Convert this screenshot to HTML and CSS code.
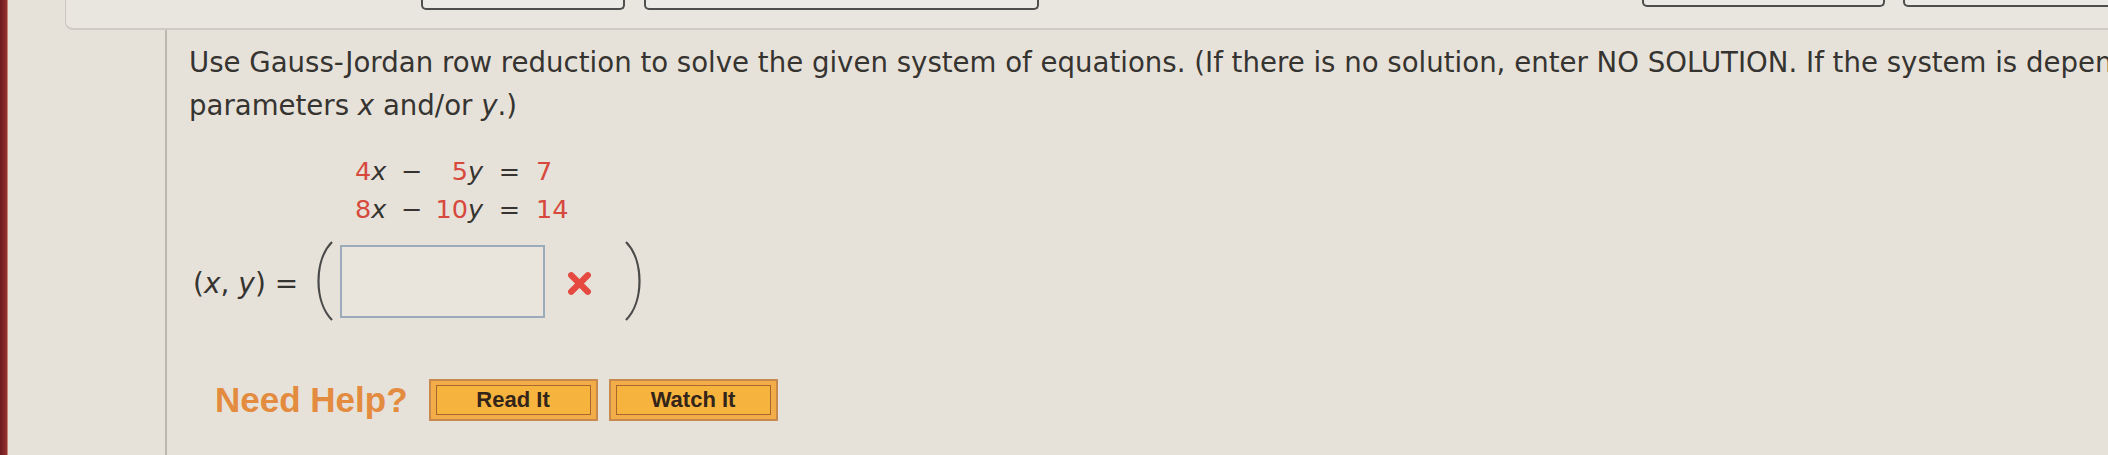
FILE: index.html
```html
<!DOCTYPE html>
<html lang="en">
<head>
<meta charset="utf-8">
<title>Gauss-Jordan</title>
<link rel="stylesheet" href="styles.css">
</head>
<body>
<div class="page">
  <div class="edge"></div>
  <div class="main">
    <div class="toolbar">
      <span class="tab t1"></span>
      <span class="tab t2"></span>
      <span class="tab t3"></span>
      <span class="tab t4"></span>
    </div>
    <div class="content">
      <div class="side"></div>
      <div class="question">
        <p class="prompt">Use Gauss-Jordan row reduction to solve the given system of equations. (If there is no solution, enter NO SOLUTION. If the system is dependent, express your answer in terms of the<br>parameters <i>x</i> and/or <i>y</i>.)</p>
        <div class="system">
          <span class="c1"><span class="coef">4</span><i>x</i></span>
          <span class="c2">&minus;</span>
          <span class="c3"><span class="coef">5</span><i>y</i></span>
          <span class="c4">=</span>
          <span class="c5 coef">7</span>
          <span class="c1"><span class="coef">8</span><i>x</i></span>
          <span class="c2">&minus;</span>
          <span class="c3"><span class="coef">10</span><i>y</i></span>
          <span class="c4">=</span>
          <span class="c5 coef">14</span>
        </div>
        <div class="answer">
          <span class="label">(<i>x</i>, <i>y</i>) =</span>
          <svg class="paren open" width="24" height="82" viewBox="0 0 24 82"><path d="M21 2 C3 20, 3 62, 21 80" /></svg>
          <span class="field"></span>
          <svg class="wrong" width="27" height="27" viewBox="0 0 26 26"><path d="M5 5 L21 21 M21 5 L5 21" /></svg>
          <svg class="paren close" width="24" height="82" viewBox="0 0 24 82"><path d="M3 2 C21 20, 21 62, 3 80" /></svg>
        </div>
        <div class="help">
          <span class="need">Need Help?</span>
          <span class="btn read"><span class="btn-inner">Read It</span></span>
          <span class="btn watch"><span class="btn-inner">Watch It</span></span>
        </div>
      </div>
    </div>
  </div>
</div>
</body>
</html>
```

FILE: styles.css
```css
html, body {
  margin: 0;
  padding: 0;
  width: 2108px;
  height: 455px;
  overflow: hidden;
  background: #e7e2d9;
}

.page {
  display: flex;
  width: 2108px;
  height: 455px;
  overflow: hidden;
}

.edge {
  width: 7px;
  flex-shrink: 0;
  background: linear-gradient(to right, #6e1a1e, #93302f);
  border-right: 1px solid #c98677;
}

.main {
  flex: 1;
  min-width: 0;
  display: flex;
  flex-direction: column;
}

.toolbar {
  margin-left: 57px;
  height: 30px;
  box-sizing: border-box;
  border-left: 1px solid #cdc8bf;
  border-bottom: 2px solid #cfcac2;
  border-bottom-left-radius: 8px;
  background: #e9e6e0;
  display: flex;
  align-items: flex-start;
  overflow: hidden;
}

.tab {
  display: block;
  flex-shrink: 0;
  height: 10px;
  box-sizing: border-box;
  border: 2px solid #4e4e4e;
  border-top: 0;
  border-radius: 0 0 5px 5px;
  background: #eceae6;
}

.t1 { margin-left: 355px; width: 204px; }
.t2 { margin-left: 19px; width: 395px; }
.t3 { margin-left: 603px; width: 243px; height: 7px; }
.t4 { margin-left: 18px; width: 260px; height: 7px; }

.content {
  flex: 1;
  display: flex;
}

.side {
  width: 157px;
  flex-shrink: 0;
  border-right: 2px solid #bdb8af;
}

.question {
  flex: 1;
  min-width: 0;
  padding-left: 22px;
  padding-top: 11px;
  color: #363431;
  font-family: "DejaVu Sans", Verdana, sans-serif;
}

.prompt {
  margin: 0;
  font-size: 27.6px;
  line-height: 43px;
  white-space: nowrap;
}

.prompt i, .system i, .label i {
  font-style: italic;
}

.system {
  margin-top: 25px;
  margin-left: 166px;
  display: grid;
  grid-template-columns: 40px 33px 55px 53px auto;
  font-size: 25.5px;
  line-height: 38px;
  width: max-content;
}

.coef { color: #d6493c; }
.c1 { text-align: left; }
.c2 { text-align: center; }
.c3 { text-align: right; }
.c4 { text-align: center; }
.c5 { text-align: left; }

.answer {
  margin-top: 12px;
  margin-left: 4px;
  height: 82px;
  display: flex;
  align-items: center;
}

.label {
  font-size: 28px;
  line-height: 38px;
  padding-top: 6px;
}

.paren path {
  fill: none;
  stroke: #4a4a4a;
  stroke-width: 2.2;
}

.paren.open { margin-left: 13px; }
.paren.close { margin-left: 30px; }

.field {
  display: block;
  margin-left: 5px;
  width: 205px;
  height: 73px;
  box-sizing: border-box;
  border: 2px solid #9aabba;
  background: #e9e5dd;
}

.wrong {
  margin-left: 21px;
  margin-top: 4px;
}

.wrong path {
  fill: none;
  stroke: #e5493f;
  stroke-width: 6;
  stroke-linecap: round;
}

.help {
  margin-top: 57px;
  margin-left: 26px;
  display: flex;
  align-items: center;
}

.need {
  font-family: "Liberation Sans", Arial, sans-serif;
  font-weight: bold;
  font-size: 35px;
  color: #e38b3e;
  margin-right: 21px;
}

.btn {
  display: block;
  width: 169px;
  height: 42px;
  box-sizing: border-box;
  border: 2px solid #c88a4c;
  background: #f2ad48;
  padding: 4px 5px;
}

.watch { margin-left: 11px; }

.btn-inner {
  display: flex;
  align-items: center;
  justify-content: center;
  height: 100%;
  box-sizing: border-box;
  border: 1.5px solid #a8672c;
  background: #f6b43e;
  font-family: "Liberation Sans", Arial, sans-serif;
  font-weight: bold;
  font-size: 22px;
  color: #33251a;
}
```
